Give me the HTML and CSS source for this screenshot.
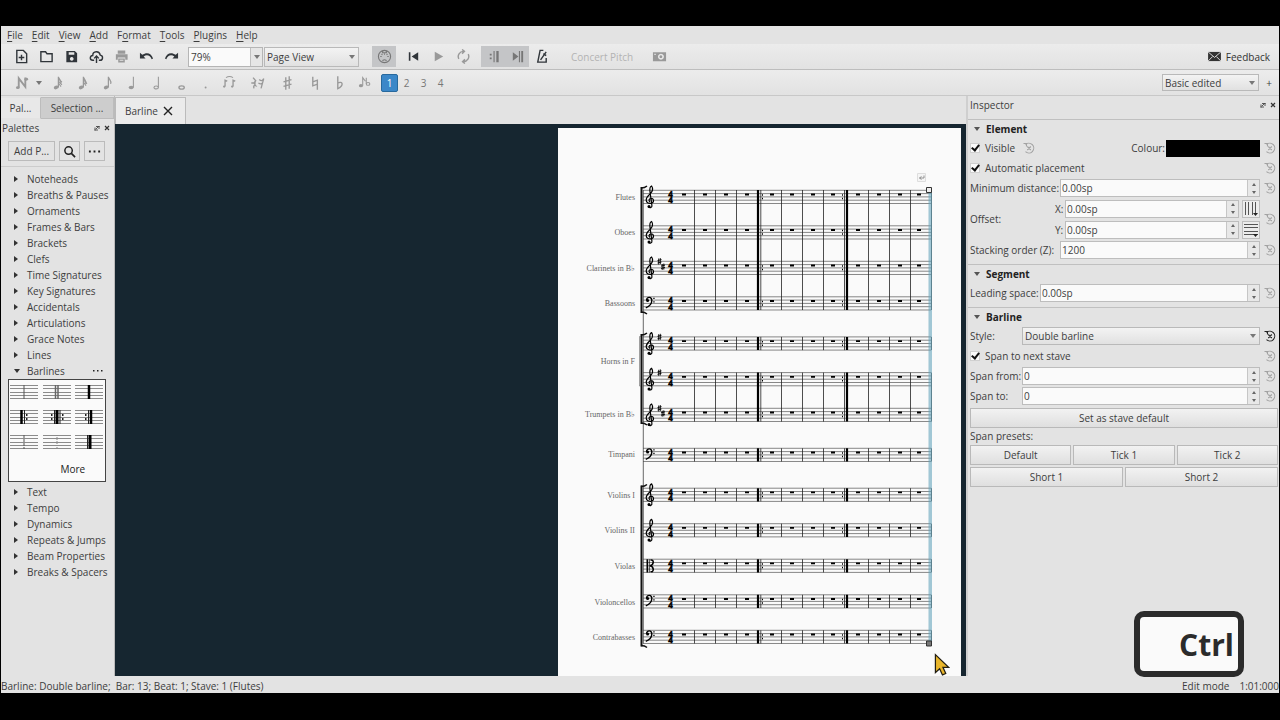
FILE: index.html
```html
<!DOCTYPE html>
<html lang="en">
<head>
<meta charset="utf-8">
<title>Barline</title>
<link rel="stylesheet" href="styles.css">
</head>
<body>
<svg class="defs" aria-hidden="true">
  <defs>
    <symbol id="reset" viewBox="0 0 12 12"><path d="M2.500 2.500A4.900 4.900 0 1 1 2.500 9.700M.5 1.500h3v3M4.300 4.500l3.500 3.500M7.800 4.500l-3.500 3.500" fill="none" stroke="currentColor" stroke-width="1.100"/></symbol>
    <symbol id="float" viewBox="0 0 8 8"><path d="M3 2.500h3.500M6 2v3M2 3.500v3M1.500 6h3.500M3 5l2-2" fill="none" stroke="currentColor" stroke-width=".8"/></symbol>
    <symbol id="close" viewBox="0 0 8 8"><path d="M2 2l4 4M6 2L2 6" stroke="currentColor" stroke-width="1.200"/></symbol>
    <symbol id="flagnote" viewBox="0 0 16 18"><ellipse cx="6.500" cy="14" rx="2.800" ry="2" transform="rotate(-20 6.500 14)"/><path d="M9 14V2c.5 3 4 4 2.500 8" fill="none" stroke="currentColor" stroke-width="1.400"/></symbol>
    <symbol id="sharp" viewBox="0 0 10 14"><path d="M3.500 2v11M6.500 1v11M1.500 6l7-2M1.500 10l7-2" fill="none" stroke="currentColor" stroke-width="1.200"/></symbol>
    <symbol id="palstaff" viewBox="0 0 28 16"><path d="M0 1.500h28M0 4.500h28M0 8.500h28M0 11.500h28M0 14.500h28" stroke="#8b8b8b" fill="none"/></symbol>
    <g id="staff">
      <path d="M643 0H931M643 3.300H931M643 6.600H931M643 9.900H931M643 13.200H931" stroke="#555" stroke-width=".7" fill="none"/>
      <path d="M682 3.300h4v1.800h-4zM703 3.300h4v1.800h-4zM724 3.300h4v1.800h-4zM745 3.300h4v1.800h-4zM770 3.300h4v1.800h-4zM790 3.300h4v1.800h-4zM811 3.300h4v1.800h-4zM831 3.300h4v1.800h-4zM856 3.300h4v1.800h-4zM877 3.300h4v1.800h-4zM898 3.300h4v1.800h-4zM917 3.300h4v1.800h-4z" fill="#000"/>
      <text x="670.500" y="6.500" class="meter">4</text><text x="670.500" y="13.200" class="meter">4</text>
      <path d="M762 4h1v1.500h-1zM762 7.500h1v1.500h-1zM842 4h1v1.500h-1zM842 7.500h1v1.500h-1z"/>
    </g>
    <g id="bars" fill="none" stroke="#222">
      <path d="M694.500 0v13.200M715.500 0v13.200M736.500 0v13.200M760.800 0v13.200M781.500 0v13.200M802.500 0v13.200M823.500 0v13.200M844.500 0v13.200M868.500 0v13.200M889.500 0v13.200M910.500 0v13.200M931.500 0v13.200" stroke-width=".8"/>
      <path d="M758 0v13.200M847 0v13.200" stroke="#000" stroke-width="2.200"/>
    </g>
    <g id="treble"><path d="M3.600 16.300C4.800 18.300 7.300 17.200 6.900 15L5 1.500C4.600-1.500 5.500-4 6.600-4.300C8.100-2 7.600.8 5.600 3C3.600 5.200 1.200 6.900 1.200 9.600C1.200 12.200 3.500 13.300 5.800 13.100C9.800 12.600 9 7.800 6 8C3.600 8.300 3.600 10.800 5 11.600" fill="none" stroke="#000" stroke-width="1.200"/><circle cx="4" cy="16.300" r="1.500"/></g>
    <g id="bass"><path d="M1.500 3.600C1.800-.3 7-.6 6.800 4C6.600 8 3.600 10 .8 11" fill="none" stroke="#000" stroke-width="1.400"/><circle cx="2.600" cy="3.600" r="1.500"/><path d="M8.300 1h1.300v1.300H8.300zM8.300 4.500h1.300v1.300H8.300z"/></g>
    <g id="alto"><path d="M1.500 0h1.600v13.200H1.500zM3.900 0h.7v13.200h-.7z"/><path d="M5.500 1C9-.5 9.500 5.500 5 6.600C9.500 7.700 9 13.700 5.500 12.200" fill="none" stroke="#000" stroke-width="1.500"/></g>
    <g id="key"><path d="M-.8-2.800v6M.8-3.200v6M-2-.7l4-1M-2 1.700l4-1" fill="none" stroke="#000" stroke-width=".9"/></g>
  </defs>
</svg>
<div class="app">
  <nav class="menubar">
    <button><u>F</u>ile</button><button><u>E</u>dit</button><button><u>V</u>iew</button><button><u>A</u>dd</button><button>F<u>o</u>rmat</button><button><u>T</u>ools</button><button><u>P</u>lugins</button><button><u>H</u>elp</button>
  </nav>
  <div class="toolbar main-tools">
    <button class="tool" aria-label="New"><svg viewBox="0 0 16 16"><path d="M3 1.500h7l3.500 3.500v9.500H3zM8 6v6M5 9h6" class="ln"/></svg></button>
    <button class="tool" aria-label="Open"><svg viewBox="0 0 16 16"><path d="M2 3h5l1.500 2H14v8.500H2z" class="ln"/></svg></button>
    <button class="tool" aria-label="Save"><svg viewBox="0 0 16 16"><path fill-rule="evenodd" d="M2.500 2h9L14 4.500V14H2.500zM5 3.500v2.500h6V3.500zM8.200 8.500a2 2 0 1 0 .1 0z"/></svg></button>
    <button class="tool" aria-label="Save online"><svg viewBox="0 0 16 16"><path d="M5.500 12H4C.5 12 .5 7.500 4 7C4 2 11 1.500 12 6.500C15.500 7 15 12 12 12h-1.500M8 15V8M5.500 10L8 7.500L10.500 10" class="ln"/></svg></button>
    <button class="tool off" aria-label="Print"><svg viewBox="0 0 16 16"><path fill-rule="evenodd" d="M4 1.500h8V5H4zM2 5.500h12.500v6H12V9H4v2.500H2zM4.500 10h7v4.500h-7zM6 11.500v1h4v-1z"/></svg></button>
    <button class="tool" aria-label="Undo"><svg viewBox="0 0 16 16"><path d="M1 4v6h6L5 8C8.500 5.500 12 7 13.500 11L15 10C13 4 8 3 3.500 6.200z"/></svg></button>
    <button class="tool" aria-label="Redo"><svg viewBox="0 0 16 16"><path d="M15 4v6H9L11 8C7.500 5.500 4 7 2.500 11L1 10C3 4 8 3 12.500 6.200z"/></svg></button>
    <div class="zoombox"><input aria-label="Zoom" value="79%"><button aria-label="Zoom levels"><i class="down"></i></button></div>
    <div class="combo view"><select aria-label="View mode"><option>Page View</option></select></div>
    <button class="tool on midi" aria-label="MIDI input"><svg viewBox="0 0 16 16"><circle cx="8" cy="8" r="6.500" class="thin"/><path d="M6 2v2h4V2M3.500 8h1.500M11 8h1.500M4.800 5.300l1 .8M11.200 5.300l-1 .8M6 13c0-2 4-2 4 0M7.500 5.500h1" class="thin"/></svg></button>
    <button class="tool rewind" aria-label="Rewind"><svg viewBox="0 0 16 16"><path d="M3 3.500h1.700v9H3zM13 3.500v9L6 8z"/></svg></button>
    <button class="tool off" aria-label="Play"><svg viewBox="0 0 16 16"><path d="M4 3l9 5-9 5z"/></svg></button>
    <button class="tool off" aria-label="Loop"><svg viewBox="0 0 16 16"><path d="M3 10.500A5.500 5.500 0 0 1 8 2.500M13 5.500a5.500 5.500 0 0 1-5 8M6.500.5L9 2.500L6.500 5M9.500 11L7 13.500L9.500 15.500" class="ln"/></svg></button>
    <button class="tool on repeat" aria-label="Play repeats"><svg viewBox="0 0 16 16"><path d="M4 5h2v2H4zM4 9h2v2H4zM8 2h1.200v12H8zM11 2h2.500v12H11z"/></svg></button>
    <button class="tool on" aria-label="Pan score"><svg viewBox="0 0 16 16"><path d="M3 3.500l6 4.500-6 4.500zM9.500 2h1.200v12H9.500zM12 2h2v12h-2z"/></svg></button>
    <button class="tool dark" aria-label="Metronome"><svg viewBox="0 0 16 16"><path d="M10 1.500H6.500L4 14h9V9.500M7 11.500L13 3M10 5l3 2" class="ln"/></svg></button>
    <button class="concert" disabled>Concert Pitch</button>
    <button class="tool off" aria-label="Image capture"><svg viewBox="0 0 16 16"><path fill-rule="evenodd" d="M1 3.500h14V13H1zM2.500 5v1.500H4V5zM9.500 5a3.200 3.200 0 1 0 .1 0zM9.500 6.700a1.500 1.500 0 1 1-.1 0z"/></svg></button>
    <button class="feedback"><svg viewBox="0 0 16 12"><path d="M1 1h14v10H1z"/><path d="M1 1l7 6 7-6M1 11l5-5M15 11l-5-5" fill="none" stroke="#e6e6e6"/></svg>Feedback</button>
  </div>
  <div class="toolbar note-tools">
    <button class="tool off" aria-label="Note input"><svg viewBox="0 0 16 16"><path d="M4 13V3l7 9V2" fill="none" stroke="currentColor" stroke-width="2"/><ellipse cx="3" cy="13" rx="2" ry="1.500"/><ellipse cx="12" cy="4" rx="2" ry="1.500"/></svg></button>
    <button class="caret" aria-label="Input modes"><i class="down"></i></button>
    <button class="tool off" aria-label="64th"><svg viewBox="0 0 16 18"><use href="#flagnote"/><path d="M9 4l4 4M9 7l4 4M9 9l3 4" class="thin"/></svg></button>
    <button class="tool off" aria-label="32nd"><svg viewBox="0 0 16 18"><use href="#flagnote"/><path d="M9 5l4 5M9 8l3 4" class="thin"/></svg></button>
    <button class="tool off" aria-label="Eighth"><svg viewBox="0 0 16 18"><use href="#flagnote"/></svg></button>
    <button class="tool off" aria-label="Quarter"><svg viewBox="0 0 16 18"><ellipse cx="6.500" cy="14" rx="2.800" ry="2"/><path d="M9 14V2" class="thin"/></svg></button>
    <button class="tool off" aria-label="Half"><svg viewBox="0 0 16 18"><ellipse cx="6.500" cy="14" rx="2.500" ry="1.600" class="thin"/><path d="M9 14V2" class="thin"/></svg></button>
    <button class="tool off" aria-label="Whole"><svg viewBox="0 0 16 18"><ellipse cx="7" cy="14" rx="3" ry="1.800" class="ln"/></svg></button>
    <button class="tool off dot" aria-label="Dot"><svg viewBox="0 0 16 18"><circle cx="7" cy="14" r="1.100"/></svg></button>
    <button class="tool off" aria-label="Tie"><svg viewBox="0 0 16 18"><path d="M3 13V6l2.500 1M12 13V6l2.500 1" class="ln"/><path d="M4 3q4-2.500 8 0" class="thin"/><circle cx="2" cy="13" r="1.300"/><circle cx="11" cy="13" r="1.300"/></svg></button>
    <button class="tool off rest" aria-label="Rest"><svg viewBox="0 0 16 18"><path d="M3 3l3 3.500-2 2.500 2 3q-3-1-2 3M1 9h5M10 5q3 3 5-1l-3 11M9 9q3 2 4 0" class="ln"/></svg></button>
    <button class="tool off rest" aria-label="Sharp"><svg viewBox="0 0 10 14"><use href="#sharp"/></svg></button>
    <button class="tool off" aria-label="Natural"><svg viewBox="0 0 10 14"><path d="M3.500 1.500v8l4-1.500v5M3.500 6l4-1.500V9" class="thin"/></svg></button>
    <button class="tool off" aria-label="Flat"><svg viewBox="0 0 10 14"><path d="M3.500 1v11c6-3 4-7 0-5" class="thin"/></svg></button>
    <button class="tool off" aria-label="Flip"><svg viewBox="0 0 16 18"><ellipse cx="4" cy="12" rx="2.300" ry="1.800"/><ellipse cx="12" cy="10" rx="2" ry="1.600" class="thin"/><path d="M6 12V3l3 4M10 3v7" class="thin"/></svg></button>
    <div class="voices"><button class="sel">1</button><button>2</button><button>3</button><button>4</button></div>
    <div class="combo workspace"><select aria-label="Workspace"><option>Basic edited</option></select></div>
    <button class="plus" aria-label="Add workspace">+</button>
  </div>
  <div class="work">
    <aside class="palettes">
      <div class="tabs"><button class="active">Pal...</button><button>Selection ...</button></div>
      <div class="dock-title"><span>Palettes</span><button aria-label="Float"><svg><use href="#float"/></svg></button><button aria-label="Close"><svg><use href="#close"/></svg></button></div>
      <div class="finder"><button class="add">Add P...</button><button aria-label="Search"><svg viewBox="0 0 14 14"><circle cx="6" cy="6" r="4" fill="none" stroke="#222" stroke-width="1.600"/><path d="M9 9l4 4" stroke="#222" stroke-width="1.800"/></svg></button><button class="dots" aria-label="More options"><svg viewBox="0 0 14 14"><path d="M1 6h2v2H1zM6 6h2v2H6zM11 6h2v2h-2z"/></svg></button></div>
      <ul class="tree">
        <li>Noteheads</li><li>Breaths &amp; Pauses</li><li>Ornaments</li><li>Frames &amp; Bars</li><li>Brackets</li><li>Clefs</li><li>Time Signatures</li><li>Key Signatures</li><li>Accidentals</li><li>Articulations</li><li>Grace Notes</li><li>Lines</li>
        <li class="open"><span>Barlines</span><button aria-label="Barlines options"><svg viewBox="0 0 12 4"><path d="M1 1h1.500v1.500H1zM5 1h1.500v1.500H5zM9 1h1.500v1.500H9z"/></svg></button></li>
      </ul>
      <div class="cells">
        <svg viewBox="0 0 28 16"><use href="#palstaff"/><path d="M14 1v14" stroke="#555"/></svg>
        <svg viewBox="0 0 28 16"><use href="#palstaff"/><path d="M12.500 1v14M15 1v14" stroke="#666" stroke-width="1.500"/></svg>
        <svg viewBox="0 0 28 16"><use href="#palstaff"/><path d="M14 1v14" stroke="#000" stroke-width="2.500"/></svg>
        <svg viewBox="0 0 28 16"><use href="#palstaff"/><path d="M11.500 1v14" stroke="#000" stroke-width="2.500"/><path d="M14.500 1v14" stroke="#222"/><path d="M16 5h1.500v2H16zM16 9h1.500v2H16z"/></svg>
        <svg viewBox="0 0 28 16"><use href="#palstaff"/><path d="M14 1v14" stroke="#000" stroke-width="3"/><path d="M11.500 1v14M17 1v14" stroke="#222"/><path d="M8 5h1.500v2H8zM8 9h1.500v2H8zM19 5h1.500v2H19zM19 9h1.500v2H19z"/></svg>
        <svg viewBox="0 0 28 16"><use href="#palstaff"/><path d="M16 1v14" stroke="#000" stroke-width="2.500"/><path d="M13.500 1v14" stroke="#222"/><path d="M10 5h1.500v2H10zM10 9h1.500v2H10z"/></svg>
        <svg viewBox="0 0 28 16"><use href="#palstaff"/><path d="M14 1v14" stroke="#555" stroke-dasharray="3 1"/></svg>
        <svg viewBox="0 0 28 16"><use href="#palstaff"/><path d="M14 1v14" stroke="#888" stroke-dasharray="1 1"/></svg>
        <svg viewBox="0 0 28 16"><use href="#palstaff"/><path d="M15 1v14" stroke="#000" stroke-width="3"/><path d="M12.500 1v14" stroke="#222"/></svg>
        <button class="more">More</button>
      </div>
      <ul class="tree last"><li>Text</li><li>Tempo</li><li>Dynamics</li><li>Repeats &amp; Jumps</li><li>Beam Properties</li><li>Breaks &amp; Spacers</li></ul>
    </aside>
    <main class="document">
      <div class="doc-tabs"><button>Barline<svg viewBox="0 0 10 10"><path d="M1 1l8 8M9 1L1 9" stroke="#222" stroke-width="1.400"/></svg></button></div>
      <div class="canvas">
        <div class="page">
          <svg class="score" viewBox="558 128 403 548">
            <use href="#staff" y="190.300"/><use href="#staff" y="225.800"/><use href="#staff" y="261.300"/><use href="#staff" y="296.800"/>
            <use href="#staff" y="336.900"/><use href="#staff" y="372.600"/><use href="#staff" y="408.300"/><use href="#staff" y="448.300"/>
            <use href="#staff" y="488.200"/><use href="#staff" y="523.700"/><use href="#staff" y="559.200"/><use href="#staff" y="594.800"/><use href="#staff" y="630.300"/>
            <g fill="none" stroke="#222">
              <path d="M694.500 190v120M715.500 190v120M736.500 190v120M760.800 190v120M781.500 190v120M802.500 190v120M823.500 190v120M844.500 190v120M868.500 190v120M889.500 190v120M910.500 190v120M931.500 190v120" stroke-width=".8"/>
              <path d="M758 190v120M847 190v120" stroke="#000" stroke-width="2.200"/>
              <path d="M694.500 372.600v49M715.500 372.600v49M736.500 372.600v49M760.800 372.600v49M781.500 372.600v49M802.500 372.600v49M823.500 372.600v49M844.500 372.600v49M868.500 372.600v49M889.500 372.600v49M910.500 372.600v49M931.500 372.600v49" stroke-width=".8"/>
              <path d="M758 372.600v49M847 372.600v49" stroke="#000" stroke-width="2.200"/>
            </g>
            <use href="#bars" y="336.900"/><use href="#bars" y="448.300"/><use href="#bars" y="488.200"/><use href="#bars" y="523.700"/><use href="#bars" y="559.200"/><use href="#bars" y="594.800"/><use href="#bars" y="630.300"/>
            <use href="#treble" x="645" y="190.300"/><use href="#treble" x="645" y="225.800"/><use href="#treble" x="645" y="261.300"/><use href="#bass" x="645" y="296.800"/>
            <use href="#treble" x="645" y="336.900"/><use href="#treble" x="645" y="372.600"/><use href="#treble" x="645" y="408.300"/><use href="#bass" x="645" y="448.300"/>
            <use href="#treble" x="645" y="488.200"/><use href="#treble" x="645" y="523.700"/><use href="#alto" x="645" y="559.200"/><use href="#bass" x="645" y="594.800"/><use href="#bass" x="645" y="630.300"/>
            <use href="#key" x="659.500" y="261.300"/><use href="#key" x="663" y="266.800"/><use href="#key" x="659.500" y="337"/><use href="#key" x="659.500" y="372.600"/><use href="#key" x="659.500" y="408.300"/><use href="#key" x="663" y="413.500"/>
            <path d="M643.300 190v453.500" stroke="#444" stroke-width=".8"/>
            <path d="M639.500 336.500h1M639.500 336.500v49.500h1" fill="none" stroke="#777" stroke-width=".7"/>
            <path d="M641.500 187v126M641.500 334v90M641.500 485.500v161" stroke="#111" stroke-width="2"/>
            <path d="M641 188q4 0 6-2M641 312q4 0 6 2M641 335q4 0 6-2M641 423q4 0 6 2M641 486.500q4 0 6-2M641 645.500q4 0 6 2" fill="none" stroke="#111" stroke-width="1.300"/>
            <g class="part">
              <text x="635" y="199.500">Flutes</text><text x="635" y="235">Oboes</text><text x="635" y="271">Clarinets in B♭</text><text x="635" y="306">Bassoons</text><text x="635" y="364">Horns in F</text><text x="635" y="417">Trumpets in B♭</text><text x="635" y="457">Timpani</text><text x="635" y="497.500">Violins I</text><text x="635" y="533">Violins II</text><text x="635" y="569">Violas</text><text x="635" y="604.500">Violoncellos</text><text x="635" y="639.500">Contrabasses</text>
            </g>
            <path d="M928.500 190h3.500v454h-3.500z" fill="#65a5bd" fill-opacity=".6"/>
            <path d="M926.500 187.500h5v5h-5z" fill="#eee" stroke="#333"/><path d="M926.500 641h5v5h-5z" fill="#777" stroke="#333"/>
            <path d="M917.500 173.500h8v8h-8z" fill="#f5f5f5" stroke="#ddd"/><path d="M924 175.500v2.500h-4.500m2-1.500l-2 1.500 2 1.500" fill="none" stroke="#888" stroke-width=".9"/>
          </svg>
          <svg class="cursor" viewBox="0 0 17 25"><path d="M1.500 1.500v19l4.500-4 3 6.500 3.500-1.500-3-6.500h6z" fill="#e9b62b" stroke="#211d12" stroke-width="1.300"/></svg>
        </div>
      </div>
    </main>
    <aside class="inspector">
      <div class="dock-title"><span>Inspector</span><button aria-label="Float"><svg><use href="#float"/></svg></button><button aria-label="Close"><svg><use href="#close"/></svg></button></div>
      <section>
        <h2>Element</h2>
        <div class="row"><label class="check"><input type="checkbox" checked>Visible</label><button class="reset" aria-label="Reset visible"><svg><use href="#reset"/></svg></button><span class="colour">Colour:</span><button class="swatch" aria-label="Colour"></button><button class="reset" aria-label="Reset colour"><svg><use href="#reset"/></svg></button></div>
        <div class="row"><label class="check grow"><input type="checkbox" checked>Automatic placement</label><button class="reset" aria-label="Reset placement"><svg><use href="#reset"/></svg></button></div>
        <div class="row"><label class="wide" for="dist">Minimum distance:</label><div class="spin"><input id="dist" value="0.00sp"><div><button aria-label="Up"></button><button aria-label="Down"></button></div></div><button class="reset" aria-label="Reset distance"><svg><use href="#reset"/></svg></button></div>
        <div class="row offset"><span class="offlabel">Offset:</span>
          <div class="axes">
            <div class="axis"><label for="ox">X:</label><div class="spin"><input id="ox" value="0.00sp"><div><button aria-label="Up"></button><button aria-label="Down"></button></div></div><button class="snap" aria-label="Snap horizontally"><svg viewBox="0 0 16 16"><path d="M2.500 1v13M5.500 1v13M9.500 1v13M12.500 1v13" stroke="#555"/><path d="M10 12h5l-2.500 3z"/></svg></button></div>
            <div class="axis"><label for="oy">Y:</label><div class="spin"><input id="oy" value="0.00sp"><div><button aria-label="Up"></button><button aria-label="Down"></button></div></div><button class="snap" aria-label="Snap vertically"><svg viewBox="0 0 16 16"><path d="M1 2.500h14M1 5.500h14M1 9.500h14M1 12.500h14" stroke="#555"/><path d="M10 12h5l-2.500 3z"/></svg></button></div>
          </div>
          <button class="reset" aria-label="Reset offset"><svg><use href="#reset"/></svg></button></div>
        <div class="row"><label class="wide" for="stack">Stacking order (Z):</label><div class="spin"><input id="stack" value="1200"><div><button aria-label="Up"></button><button aria-label="Down"></button></div></div><button class="reset" aria-label="Reset stacking order"><svg><use href="#reset"/></svg></button></div>
      </section>
      <section>
        <h2>Segment</h2>
        <div class="row"><label class="mid" for="lead">Leading space:</label><div class="spin"><input id="lead" value="0.00sp"><div><button aria-label="Up"></button><button aria-label="Down"></button></div></div><button class="reset" aria-label="Reset leading space"><svg><use href="#reset"/></svg></button></div>
      </section>
      <section class="end">
        <h2>Barline</h2>
        <div class="row"><label class="short" for="style">Style:</label><div class="combo style"><select id="style"><option>Double barline</option></select></div><button class="reset active" aria-label="Reset style"><svg><use href="#reset"/></svg></button></div>
        <div class="row"><label class="check grow"><input type="checkbox" checked>Span to next stave</label><button class="reset" aria-label="Reset span"><svg><use href="#reset"/></svg></button></div>
        <div class="row"><label class="short" for="from">Span from:</label><div class="spin"><input id="from" value="0"><div><button aria-label="Up"></button><button aria-label="Down"></button></div></div><button class="reset" aria-label="Reset span from"><svg><use href="#reset"/></svg></button></div>
        <div class="row"><label class="short" for="to">Span to:</label><div class="spin"><input id="to" value="0"><div><button aria-label="Up"></button><button aria-label="Down"></button></div></div><button class="reset" aria-label="Reset span to"><svg><use href="#reset"/></svg></button></div>
        <div class="pushes"><button>Set as stave default</button></div>
        <p>Span presets:</p>
        <div class="pushes"><button>Default</button><button>Tick 1</button><button>Tick 2</button></div>
        <div class="pushes"><button>Short 1</button><button>Short 2</button></div>
      </section>
    </aside>
  </div>
  <footer class="status"><span>Barline: Double barline;&nbsp; Bar: 13; Beat: 1; Stave: 1 (Flutes)</span><span class="mode">Edit mode</span><span>1:01:000</span></footer>
</div>
<div class="keycap">Ctrl</div>
</body>
</html>
```
FILE: styles.css
```css
* { box-sizing: border-box; }
body { margin: 0; background: #000; color: #3d3d3d; font: 10px/16px "Open Sans", "Noto Sans", sans-serif; }
button, input, select { margin: 0; padding: 0; border: 0; border-radius: 0; background: none; color: inherit; font: inherit; outline: 0; }
button { flex-shrink: 0; white-space: nowrap; }
svg { display: block; fill: currentColor; }
.defs { position: absolute; width: 0; height: 0; }
.ln { fill: none; stroke: currentColor; stroke-width: 1.5; }
.thin { fill: none; stroke: currentColor; stroke-width: 1.2; }
.app { display: flex; flex-direction: column; height: 100vh; padding: 26px 1px 27px; }
.app > * { background-color: #e3e3e3; }

.menubar { display: flex; flex: none; gap: 9px; height: 18px; padding-left: 6px; }
.menubar u { text-underline-offset: 2px; }
.toolbar { display: flex; flex: none; align-items: center; height: 26px; background: linear-gradient(#ececec, #e2e2e2); border-bottom: 1px solid #bdbdbd; }
.main-tools { padding-left: 8px; }
.note-tools { padding-left: 9px; border-bottom-color: #c8c8c8; }
.tool { display: grid; place-items: center; width: 25px; height: 21px; color: #30353a; }
.tool svg { width: 15px; height: 15px; }
.tool.off { color: #999; }
.tool.on { width: 24px; background: #c4c5c7; color: #777; }
.down { display: block; width: 0; height: 0; margin: auto; border: 3px solid transparent; border-top: 4px solid #777; border-bottom: 0; }
.zoombox { display: flex; width: 75px; height: 20px; margin-left: 4px; border: 1px solid #b5b5b5; background: #fafafa; }
.zoombox input { flex: 1; min-width: 0; padding-left: 2px; }
.zoombox button { width: 12px; border-left: 1px solid #c0c0c0; background: #e6e6e6; }
.combo { position: relative; height: 20px; border: 1px solid #b9b9b9; background: linear-gradient(#f3f3f3, #e1e1e1); }
.combo select { display: block; width: 100%; height: 100%; padding-left: 2px; appearance: none; }
.combo::after { content: ""; position: absolute; right: 3px; top: 7px; border: 3px solid transparent; border-top: 4px solid #777; border-bottom: 0; pointer-events: none; }
.view { width: 95px; margin-left: 1px; }
.tool.midi { margin-left: 13px; }
.rewind { margin-left: 5px; }
.repeat { margin-left: 5px; }
.concert { width: 60px; margin: 0 16px 0 17px; color: #b3b3b3; }
.feedback { display: flex; align-items: center; gap: 4px; margin-left: auto; margin-right: 9px; color: #333; }
.feedback svg { width: 15px; height: 11px; }
.caret { width: 8px; margin-right: 2px; }
.note-tools .tool svg { width: 15px; height: 16px; }
.tool.dot { width: 22px; }
.tool.rest { width: 30px; }
.voices { display: flex; margin-left: 4px; color: #777; }
.voices button { width: 17px; height: 18px; }
.voices .sel { border: 1px solid #28699d; border-radius: 2px; background: #3b87c8; color: #fff; }
.workspace { width: 97px; height: 17px; margin-left: auto; }
.workspace select { line-height: 14px; }
.workspace::after { top: 6px; }
.plus { width: 20px; }

.work { display: flex; flex: 1; min-height: 0; }
.palettes { flex: 0 0 114px; min-width: 0; border-right: 1px solid #bbb; }
.tabs { display: flex; height: 23px; padding-top: 1px; }
.tabs button { flex: 1; border: 1px solid #bcbcbc; border-left: 0; background: #cdcdcd; }
.tabs .active { flex: 0 0 40px; border-color: #e3e3e3 #bcbcbc #e3e3e3 #e3e3e3; background: #e8e8e8; }
.dock-title { display: flex; align-items: center; height: 18px; padding: 0 1px; }
.dock-title span { flex: 1; }
.dock-title button { width: 10px; color: #333; }
.dock-title svg { width: 8px; height: 8px; }
.finder { display: flex; gap: 4px; height: 30px; padding: 4px 7px 5px; border-bottom: 1px solid #ccc; }
.finder button { display: grid; place-items: center; width: 21px; border: 1px solid #bbb; }
.finder .add { width: 47px; }
.finder svg { width: 13px; height: 13px; color: #222; }
.tree { margin: 0; padding: 4px 0 0; list-style: none; }
.tree li { display: flex; align-items: center; height: 16px; padding-left: 13px; white-space: nowrap; }
.tree li::before { content: ""; flex: none; margin-right: 9px; border: 3px solid transparent; border-left: 4px solid #333; border-right: 0; }
.tree .open { padding-right: 10px; }
.tree .open::before { margin-right: 7px; border: 3px solid transparent; border-top: 4px solid #333; border-bottom: 0; }
.open span { flex: 1; }
.open svg { width: 12px; height: 4px; color: #222; }
.cells { display: grid; grid-template: 25px 25px 25px 22px / repeat(3, 28px); justify-content: space-between; align-items: start; margin: 0 8px 0 7px; padding: 4px 2px 0 1px; border: 1px solid #444; background: #fafafa; }
.cells svg { width: 28px; height: 16px; color: #222; }
.more { grid-column: 2 / 4; color: #222; justify-self: center; padding-top: 2px; }
.tree.last { padding-top: 2px; }

.document { display: flex; flex: 1; flex-direction: column; min-width: 0; }
.doc-tabs { height: 28px; padding-top: 1px; }
.doc-tabs button { display: flex; align-items: center; gap: 5px; height: 27px; padding: 0 12px 0 9px; border: 1px solid #bbb; border-bottom: 0; background: #ebebeb; }
.doc-tabs svg { width: 10px; height: 10px; }
.canvas { display: flex; flex: 1; justify-content: flex-end; min-height: 0; padding: 4px 5px 0 0; background: #162630; }
.page { position: relative; flex: 0 0 403px; overflow: hidden; background: #fafafa; }
.score { width: 100%; fill: #000; }
.meter { font: bold 9px/1 "Liberation Serif", serif; text-anchor: middle; stroke: #000; stroke-width: .5; }
.part { font: 8px/1 "Liberation Serif", serif; text-anchor: end; fill: #666; }
.cursor { position: absolute; left: 376px; top: 525px; width: 16px; height: 24px; }

.inspector { flex: 0 0 313px; border-left: 2px solid #cfcfcf; }
.inspector .dock-title { height: 24px; padding: 0 0 5px 2px; border-bottom: 1px solid #c0c0c0; }
section { padding: 0 0 4px 2px; border-bottom: 1px solid #c0c0c0; }
section.end { border: 0; }
h2 { display: flex; align-items: center; height: 18px; margin: 0; padding-left: 4px; color: #222; font-size: 10px; }
h2::before { content: ""; margin-right: 6px; border: 3px solid transparent; border-top: 4px solid #555; border-bottom: 0; }
.row { display: flex; align-items: center; min-height: 20px; }
.check { display: flex; align-items: center; gap: 5px; }
.check input { appearance: none; width: 10px; height: 10px; background: #fafafa; border: 1px solid #d0d0d0; }
.check input:checked::after { content: ""; display: block; width: 3px; height: 6px; margin: -1px 0 0 2px; border: solid #111; border-width: 0 2px 2px 0; transform: rotate(38deg); }
.grow { flex: 1; }
.reset { width: 19px; color: #a2a2a2; }
.reset svg { width: 12px; height: 12px; margin: 0 auto 0 4px; }
.reset.active { color: #222; }
.check + .reset:not(:last-child) svg { margin-left: 8px; }
.colour { margin-left: auto; }
.swatch { width: 94px; height: 17px; margin-left: 1px; background: #000; }
.wide { width: 90px; }
.mid { width: 70px; }
.short { width: 52px; }
.row label, .offlabel { flex-shrink: 0; white-space: nowrap; }
.spin { display: flex; flex: 1; min-width: 0; height: 18px; border: 1px solid #bdbdbd; background: #fafafa; }
.spin input { flex: 1; min-width: 0; padding-left: 1px; }
.spin div { display: grid; grid-template-rows: 1fr 1fr; place-items: center; width: 12px; border-left: 1px solid #c6c6c6; background: #e8e8e8; }
.spin button { border: 2px solid transparent; border-top: 0; border-bottom: 3px solid #666; }
.spin button:last-child { border-top: 3px solid #666; border-bottom: 0; }
.offlabel { width: 85px; }
.axes { flex: 1; }
.axis { display: flex; align-items: center; height: 21px; }
.axis label { width: 10px; }
.snap { width: 18px; height: 18px; margin-left: 3px; border: 1px solid #bdbdbd; background: #ececec; }
.snap svg { width: 16px; height: 16px; color: #222; }
.style { flex: 1; height: 18px; }
.style::after { top: 6px; }
.pushes { display: flex; gap: 2px; margin-top: 2px; padding-right: 1px; }
.pushes button { flex: 1 1 0; height: 20px; border: 1px solid #b9b9b9; background: linear-gradient(#f2f2f2, #dfdfdf); }
section p { height: 15px; margin: 0; }
.status { display: flex; flex: none; align-items: center; height: 17px; padding-top: 3px; }
.status .mode { margin: 0 10px 0 auto; }
.status span { line-height: 14px; }
.keycap { position: absolute; right: 36px; bottom: 43px; width: 110px; height: 66px; padding-right: 4px; border: 6px solid #2b2b2b; border-radius: 10px; background: #fafafa; color: #2b2b2b; font-size: 30px; font-weight: 700; line-height: 56px; text-align: right; }
```
